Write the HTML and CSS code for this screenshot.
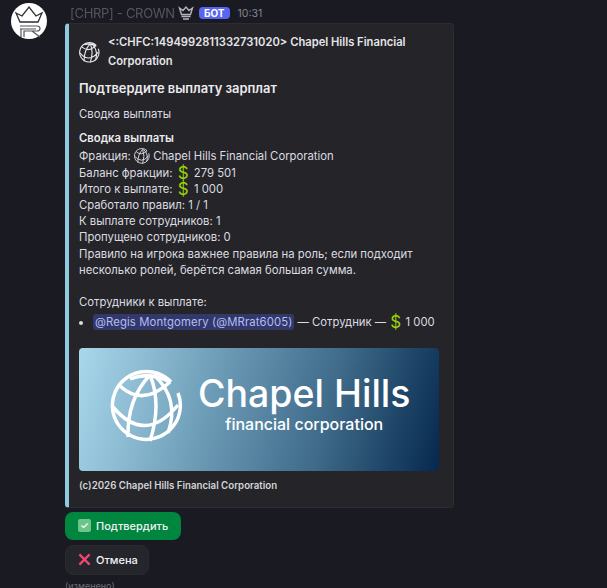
FILE: index.html
```html
<!DOCTYPE html>
<html lang="en">
<head>
    <meta charset="UTF-8">
    <title>Chapel Hills</title>
    <link rel="stylesheet" href="styles.css">
</head>
<body>
    <div class="message">
        <svg class="avatar" viewBox="0 0 36 36">
            <circle cx="18" cy="18" r="18" fill="#fff"/>
            <path d="M5 10l6 3 7-9 7 9 6-3-4 9H9z" fill="none" stroke="#2e2e33" stroke-width="1.300"/>
            <path d="M9 23h17q3 0 3 2.500t-3 2.500h-13v6M9 26h16M10 26v8M21 28l8 6" fill="none" stroke="#55555c" stroke-width="1.200"/>
        </svg>
        <div class="content">
            <div class="msg-header">
                <span class="username">[CHRP] - CROWN</span>
                <svg class="crown" viewBox="0 0 16 16">
                    <path d="M1.500 3l3.500 2.500 3-3.500 3 3.500 3.500-2.500-2 6.500h-9zM3.500 11.500h9M5 14h6" fill="none" stroke="#b5b5bb" stroke-width="1.400"/>
                </svg>
                <span class="bot-tag">БОТ</span>
                <span class="time">10:31</span>
            </div>

            <div class="embed">
                <div class="author">
                    <svg class="globe author-globe" viewBox="0 0 74 74">
                        <path d="M61 13A34 34 0 1 0 68 24"/>
                        <path d="M40 6Q17 30 18 68M40 6Q52 35 40 72M44 6Q70 30 58 64M3 38Q35 76 68 36M10 17Q33 38 60 13M20 10Q40 2 60 13"/>
                    </svg>
                    <span>&lt;:CHFC:1494992811332731020&gt; Chapel Hills Financial Corporation</span>
                </div>
                <div class="title">Подтвердите выплату зарплат</div>
                <div class="subtitle">Сводка выплаты</div>
                <div class="body">
                    <strong>Сводка выплаты</strong>
                    Фракция: <svg class="globe inline-globe" viewBox="0 0 74 74"><path d="M61 13A34 34 0 1 0 68 24"/><path d="M40 6Q17 30 18 68M40 6Q52 35 40 72M44 6Q70 30 58 64M3 38Q35 76 68 36M10 17Q33 38 60 13"/></svg> Chapel Hills Financial Corporation<br>
                    Баланс фракции: <span class="dollar">$</span> 279 501<br>
                    Итого к выплате: <span class="dollar">$</span> 1 000<br>
                    Сработало правил: 1 / 1<br>
                    К выплате сотрудников: 1<br>
                    Пропущено сотрудников: 0<br>
                    Правило на игрока важнее правила на роль; если подходит несколько ролей, берётся самая большая сумма.
                    <div class="staff-label">Сотрудники к выплате:</div>
                    <ul class="staff">
                        <li><span class="mention">@Regis Montgomery (@MRrat6005)</span> — Сотрудник — <span class="dollar">$</span> 1 000</li>
                    </ul>
                </div>
                <div class="banner">
                    <svg class="banner-globe" viewBox="0 0 74 74">
                        <path d="M61 13A34 34 0 1 0 68 24"/>
                        <path d="M40 6Q17 30 18 68M40 6Q52 35 40 72M44 6Q70 30 58 64M3 38Q35 76 68 36M10 17Q33 38 60 13M20 10Q40 2 60 13"/>
                    </svg>
                    <div class="banner-text">
                        <div class="banner-name">Chapel Hills</div>
                        <div class="banner-sub">financial corporation</div>
                    </div>
                </div>
                <div class="footer">(c)2026 Chapel Hills Financial Corporation</div>
            </div>

            <div class="actions">
                <button class="btn btn-green"><span class="check">✓</span>Подтвердить</button>
                <button class="btn btn-dark">
                    <svg class="cross" viewBox="0 0 14 14"><path d="M1.500 1.500l11 11M12.500 1.500l-11 11"/></svg>Отмена
                </button>
            </div>
            <div class="edited">(изменено)</div>
        </div>
    </div>
</body>
</html>
```
FILE: styles.css
```css
html, body {
    margin: 0;
    padding: 0;
    height: 100%;
    overflow: hidden;
    background-color: #1a1a22;
    font-family: Inter, "Noto Sans", Arial, sans-serif;
    color: #dcdce0;
}
.message {
    display: flex;
    gap: 18px;
    padding: 3px 0 0 11px;
}
.avatar {
    width: 36px;
    height: 36px;
    flex-shrink: 0;
}
.content {
    width: 389px;
}
.msg-header {
    display: flex;
    align-items: center;
    gap: 5px;
    height: 20px;
    margin-left: 5px;
}
.username {
    width: 103px;
    white-space: nowrap;
    font-size: 13px;
    letter-spacing: -0.3px;
    color: #55555c;
    filter: blur(0.4px);
}
.crown {
    width: 16px;
    height: 16px;
}
.bot-tag {
    background-color: #5865f2;
    color: #fff;
    font-size: 10px;
    font-weight: 700;
    padding: 0 5px;
    height: 12px;
    line-height: 12px;
    border-radius: 4px;
}
.time {
    font-size: 10.500px;
    color: #85858c;
    margin-left: 3px;
}
.embed {
    box-sizing: border-box;
    background-color: #242429;
    border: 1px solid #2c2c32;
    border-left: 4px solid #8fcae0;
    border-radius: 4px;
    padding: 9px 10px 12px;
    font-size: 11.300px;
    line-height: 16.200px;
}
.author {
    display: flex;
    align-items: center;
    gap: 7px;
    font-weight: 600;
    font-size: 11.200px;
    line-height: 19px;
    color: #e6e6ea;
}
.globe {
    fill: none;
    stroke: #e6e6ea;
    stroke-width: 4;
}
.author-globe {
    width: 21px;
    height: 21px;
    margin-right: 1px;
    flex-shrink: 0;
}
.inline-globe {
    width: 16px;
    height: 16px;
    vertical-align: -4px;
}
.title {
    margin-top: 9px;
    font-size: 12.900px;
    font-weight: 600;
    line-height: 18px;
    color: #ececef;
}
.subtitle {
    margin-top: 8px;
}
.body {
    margin-top: 8px;
}
.body strong {
    display: block;
    margin-bottom: 2px;
    font-weight: 600;
    color: #ececef;
}
.dollar {
    display: inline-block;
    width: 15px;
    text-align: center;
    color: #9ad20a;
    font-size: 17px;
    line-height: 8px;
    vertical-align: -2px;
}
.staff-label {
    margin-top: 16px;
}
.staff {
    margin: 4px 0 0;
    padding-left: 14px;
    white-space: nowrap;
}
.staff .dollar {
    width: 13px;
}
.mention {
    background-color: #33386a;
    color: #b4bdf5;
    padding: 1px 2px;
    border-radius: 3px;
    letter-spacing: 0.12px;
}
.banner {
    display: flex;
    align-items: center;
    gap: 14px;
    box-sizing: border-box;
    height: 123px;
    width: 360px;
    margin-top: 18px;
    padding: 0 0 8px 31px;
    border-radius: 4px;
    background: linear-gradient(105deg, #a9d8ec 0%, #6b9ab5 38%, #3f6a8a 68%, #05294d 100%);
}
.banner-globe {
    width: 74px;
    height: 74px;
    flex-shrink: 0;
    fill: none;
    stroke: #fff;
    stroke-width: 3.500;
}
.banner-text {
    margin-bottom: 6px;
    text-align: center;
    color: #fff;
}
.banner-name {
    font-size: 37.500px;
    font-weight: 500;
    line-height: 42px;
}
.banner-sub {
    font-size: 16px;
    font-weight: 500;
    line-height: 18px;
}
.footer {
    margin-top: 7px;
    font-size: 9.700px;
    font-weight: 600;
    color: #d4d4d8;
}
.actions {
    display: flex;
    flex-direction: column;
    align-items: flex-start;
    gap: 5px;
    margin-top: 4px;
}
.btn {
    display: flex;
    align-items: center;
    gap: 5px;
    height: 28px;
    padding: 0 12px;
    border: 1px solid transparent;
    border-radius: 8px;
    font-family: inherit;
    font-size: 11px;
    font-weight: 500;
    color: #f2f2f4;
}
.btn-green {
    background-color: #00863f;
}
.btn-dark {
    height: 30px;
    padding-right: 10px;
    background-color: #25252c;
    border-color: #2a2a31;
}
.check {
    display: inline-block;
    width: 13px;
    height: 13px;
    line-height: 13px;
    text-align: center;
    background-color: #6cc488;
    border-radius: 2px;
    font-size: 10px;
    color: #fff;
}
.cross {
    width: 13px;
    height: 13px;
    fill: none;
    stroke: #f0476e;
    stroke-width: 2.400;
}
.edited {
    margin-top: 5px;
    font-size: 9px;
    color: #6f6f76;
}
```
